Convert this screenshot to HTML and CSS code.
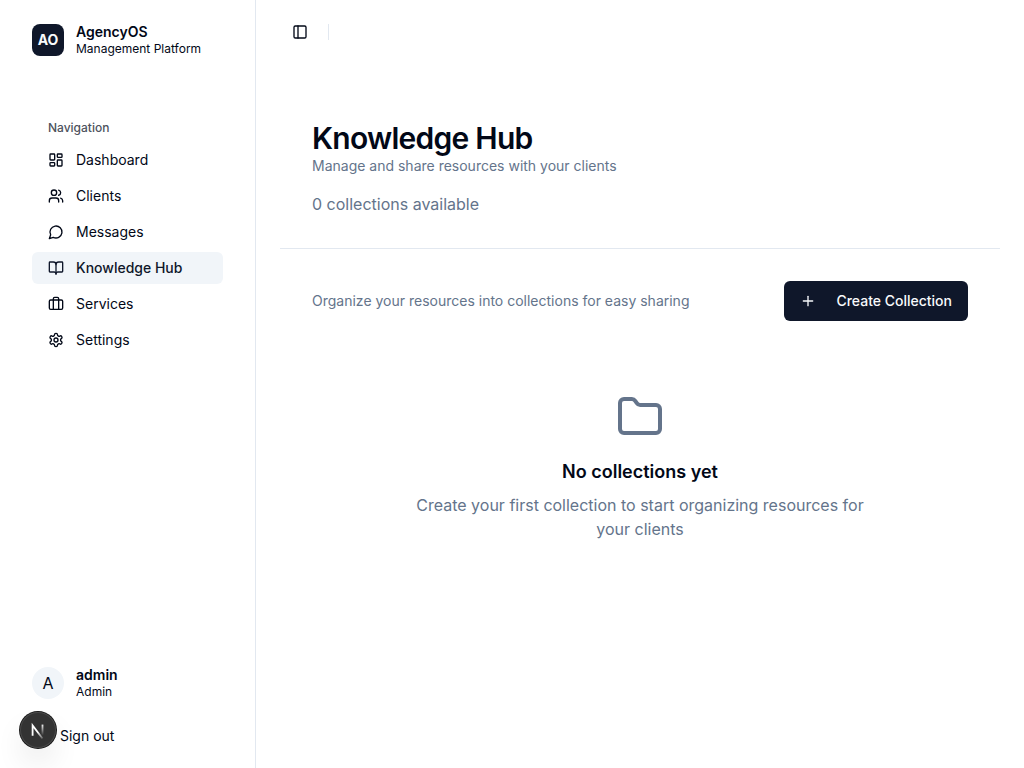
FILE: index.html
```html
<!DOCTYPE html>
<html lang="en">
<head>
<meta charset="utf-8">
<meta name="viewport" content="width=device-width, initial-scale=1">
<title>Knowledge Hub - AgencyOS</title>
<link rel="stylesheet" href="styles.css">
</head>
<body>
<div class="app">
  <aside class="sidebar">
    <div class="identity brand">
      <div class="brand-mark">AO</div>
      <div class="identity-text">
        <span class="identity-name">AgencyOS</span>
        <span class="identity-detail">Management Platform</span>
      </div>
    </div>
    <nav class="nav" aria-labelledby="nav-label">
      <div class="nav-label" id="nav-label">Navigation</div>
      <ul class="nav-list">
        <li><a class="nav-link" href="#dashboard"><svg class="icon" viewBox="0 0 24 24"><rect width="7" height="9" x="3" y="3" rx="1"/><rect width="7" height="5" x="14" y="3" rx="1"/><rect width="7" height="9" x="14" y="12" rx="1"/><rect width="7" height="5" x="3" y="16" rx="1"/></svg><span>Dashboard</span></a></li>
        <li><a class="nav-link" href="#clients"><svg class="icon" viewBox="0 0 24 24"><path d="M16 21v-2a4 4 0 0 0-4-4H6a4 4 0 0 0-4 4v2"/><circle cx="9" cy="7" r="4"/><path d="M22 21v-2a4 4 0 0 0-3-3.87"/><path d="M16 3.13a4 4 0 0 1 0 7.75"/></svg><span>Clients</span></a></li>
        <li><a class="nav-link" href="#messages"><svg class="icon" viewBox="0 0 24 24"><path d="M7.9 20A9 9 0 1 0 4 16.1L2 22Z"/></svg><span>Messages</span></a></li>
        <li><a class="nav-link nav-link-active" href="#knowledge" aria-current="page"><svg class="icon" viewBox="0 0 24 24"><path d="M12 7v14"/><path d="M3 18a1 1 0 0 1-1-1V4a1 1 0 0 1 1-1h5a4 4 0 0 1 4 4 4 4 0 0 1 4-4h5a1 1 0 0 1 1 1v13a1 1 0 0 1-1 1h-6a3 3 0 0 0-3 3 3 3 0 0 0-3-3z"/></svg><span>Knowledge Hub</span></a></li>
        <li><a class="nav-link" href="#services"><svg class="icon" viewBox="0 0 24 24"><path d="M16 20V4a2 2 0 0 0-2-2h-4a2 2 0 0 0-2 2v16"/><rect width="20" height="14" x="2" y="6" rx="2"/></svg><span>Services</span></a></li>
        <li><a class="nav-link" href="#settings"><svg class="icon" viewBox="0 0 24 24"><path d="M12.22 2h-.44a2 2 0 0 0-2 2v.18a2 2 0 0 1-1 1.73l-.43.25a2 2 0 0 1-2 0l-.15-.08a2 2 0 0 0-2.73.73l-.22.38a2 2 0 0 0 .73 2.73l.15.1a2 2 0 0 1 1 1.72v.51a2 2 0 0 1-1 1.74l-.15.09a2 2 0 0 0-.73 2.73l.22.38a2 2 0 0 0 2.73.73l.15-.08a2 2 0 0 1 2 0l.43.25a2 2 0 0 1 1 1.73V20a2 2 0 0 0 2 2h.44a2 2 0 0 0 2-2v-.18a2 2 0 0 1 1-1.73l.43-.25a2 2 0 0 1 2 0l.15.08a2 2 0 0 0 2.73-.73l.22-.39a2 2 0 0 0-.73-2.73l-.15-.08a2 2 0 0 1-1-1.74v-.5a2 2 0 0 1 1-1.74l.15-.09a2 2 0 0 0 .73-2.73l-.22-.38a2 2 0 0 0-2.73-.73l-.15.08a2 2 0 0 1-2 0l-.43-.25a2 2 0 0 1-1-1.73V4a2 2 0 0 0-2-2z"/><circle cx="12" cy="12" r="3"/></svg><span>Settings</span></a></li>
      </ul>
    </nav>
    <div class="account">
      <div class="identity">
        <div class="avatar">A</div>
        <div class="identity-text">
          <span class="identity-name">admin</span>
          <span class="identity-detail">Admin</span>
        </div>
      </div>
      <button class="sign-out" type="button">Sign out</button>
    </div>
  </aside>
  <div class="page">
    <header class="topbar">
      <button class="toggle" type="button" aria-label="Toggle sidebar"><svg class="icon" viewBox="0 0 24 24"><rect width="18" height="18" x="3" y="3" rx="2"/><path d="M9 3v18"/></svg></button>
      <div class="divider"></div>
    </header>
    <main class="content">
      <section class="intro">
        <h1 class="title">Knowledge Hub</h1>
        <p class="subtitle">Manage and share resources with your clients</p>
        <p class="count">0 collections available</p>
      </section>
      <section class="collections">
        <div class="toolbar">
          <p class="hint">Organize your resources into collections for easy sharing</p>
          <button class="create" type="button"><svg class="icon" viewBox="0 0 24 24"><path d="M5 12h14"/><path d="M12 5v14"/></svg><span>Create Collection</span></button>
        </div>
        <div class="empty">
          <svg class="icon icon-large" viewBox="0 0 24 24"><path d="M20 20a2 2 0 0 0 2-2V8a2 2 0 0 0-2-2h-7.9a2 2 0 0 1-1.69-.9L9.6 3.9A2 2 0 0 0 7.93 3H4a2 2 0 0 0-2 2v13a2 2 0 0 0 2 2Z"/></svg>
          <h2 class="empty-title">No collections yet</h2>
          <p class="empty-text">Create your first collection to start organizing resources for your clients</p>
        </div>
      </section>
    </main>
  </div>
</div>
<button class="dev-badge" type="button" aria-label="Open developer tools">
  <svg class="dev-logo" viewBox="0 0 40 40" fill="none">
    <defs>
      <linearGradient id="fade-diagonal" x1="20" y1="22" x2="27" y2="31" gradientUnits="userSpaceOnUse"><stop stop-color="#fff"/><stop offset="1" stop-color="#fff" stop-opacity="0"/></linearGradient>
      <linearGradient id="fade-stem" x1="26" y1="13" x2="26" y2="26" gradientUnits="userSpaceOnUse"><stop stop-color="#fff"/><stop offset="1" stop-color="#fff" stop-opacity="0"/></linearGradient>
    </defs>
    <path d="M14 26.500V15L25 29.500" stroke="url(#fade-diagonal)" stroke-width="2"/>
    <path d="M25 14V27" stroke="url(#fade-stem)" stroke-width="2"/>
  </svg>
</button>
</body>
</html>
```

FILE: styles.css
```css
* {
  box-sizing: border-box;
}

body {
  margin: 0;
  background: #fff;
  color: #020817;
  font-family: Inter, "Liberation Sans", sans-serif;
  font-size: 16px;
  line-height: 24px;
}

h1, h2, p, ul {
  margin: 0;
  padding: 0;
}

button {
  border: 0;
  padding: 0;
  background: none;
  color: inherit;
  font: inherit;
  cursor: pointer;
}

.icon {
  flex: none;
  width: 16px;
  height: 16px;
  fill: none;
  stroke: currentColor;
  stroke-width: 2;
  stroke-linecap: round;
  stroke-linejoin: round;
}

.app {
  display: flex;
  min-height: 100vh;
}

.sidebar {
  display: flex;
  flex: none;
  flex-direction: column;
  width: 256px;
  padding: 24px 32px 20px;
  border-right: 1px solid #e2e8f0;
}

.identity {
  display: flex;
  align-items: center;
  gap: 12px;
  height: 32px;
}

.brand {
  margin-bottom: 56px;
}

.brand-mark,
.avatar {
  display: flex;
  flex: none;
  align-items: center;
  justify-content: center;
  width: 32px;
  height: 32px;
}

.brand-mark {
  border-radius: 8px;
  background: #0f172a;
  color: #f8fafc;
  font-size: 14px;
  font-weight: 700;
}

.avatar {
  border-radius: 50%;
  background: #f1f5f9;
}

.identity-text {
  display: flex;
  flex-direction: column;
}

.identity-name {
  font-size: 14px;
  font-weight: 600;
  line-height: 18px;
}

.identity-detail {
  font-size: 12px;
  line-height: 16px;
}

.nav {
  flex: 1;
}

.nav-label {
  padding: 0 16px;
  color: #4d525d;
  font-size: 12px;
  font-weight: 500;
  line-height: 32px;
}

.nav-list {
  display: flex;
  flex-direction: column;
  gap: 4px;
  list-style: none;
}

.nav-link {
  display: flex;
  align-items: center;
  gap: 12px;
  height: 32px;
  padding: 0 16px;
  border-radius: 6px;
  color: inherit;
  font-size: 14px;
  line-height: 20px;
  text-decoration: none;
}

.nav-link-active {
  background: #f1f5f9;
  color: #0f172a;
  font-weight: 500;
}

.account {
  display: flex;
  flex-direction: column;
  gap: 25px;
}

.sign-out {
  padding: 2px 28px;
  font-size: 14px;
  line-height: 20px;
  text-align: left;
}

.page {
  flex: 1;
  min-width: 0;
}

.topbar {
  display: flex;
  align-items: center;
  gap: 14px;
  height: 64px;
  padding: 0 30px;
}

.toggle {
  display: flex;
  align-items: center;
  justify-content: center;
  width: 28px;
  height: 28px;
}

.divider {
  width: 1px;
  height: 16px;
  background: #e2e8f0;
}

.content {
  padding: 24px;
}

.intro {
  padding: 32px;
  border-bottom: 1px solid #e2e8f0;
}

.title {
  font-size: 30px;
  font-weight: 600;
  line-height: 36px;
  letter-spacing: -0.025em;
}

.subtitle,
.hint {
  color: #64748b;
  font-size: 14px;
  line-height: 20px;
}

.count {
  margin-top: 16px;
  color: #64748b;
}

.collections {
  padding: 32px;
}

.toolbar {
  display: flex;
  align-items: center;
  justify-content: space-between;
  gap: 16px;
}

.create {
  display: flex;
  flex: none;
  align-items: center;
  gap: 20px;
  height: 40px;
  padding: 0 16px;
  border-radius: 6px;
  background: #0f172a;
  color: #f8fafc;
  font-size: 14px;
  font-weight: 500;
}

.empty {
  display: flex;
  flex-direction: column;
  align-items: center;
  padding: 72px 0 48px;
  text-align: center;
}

.icon-large {
  width: 48px;
  height: 48px;
  margin-bottom: 16px;
  color: #64748b;
}

.empty-title {
  margin-bottom: 6px;
  font-size: 18px;
  font-weight: 600;
  line-height: 30px;
}

.empty-text {
  max-width: 448px;
  color: #64748b;
}

.dev-badge {
  position: fixed;
  bottom: 20px;
  left: 20px;
  width: 36px;
  height: 36px;
  border-radius: 50%;
  background: #333;
  box-shadow: 0 0 0 1px #171717, inset 0 0 0 1px #484848, 0 16px 32px -8px rgba(0, 0, 0, 0.24);
}

.dev-logo {
  display: block;
  width: 36px;
  height: 36px;
}
```
